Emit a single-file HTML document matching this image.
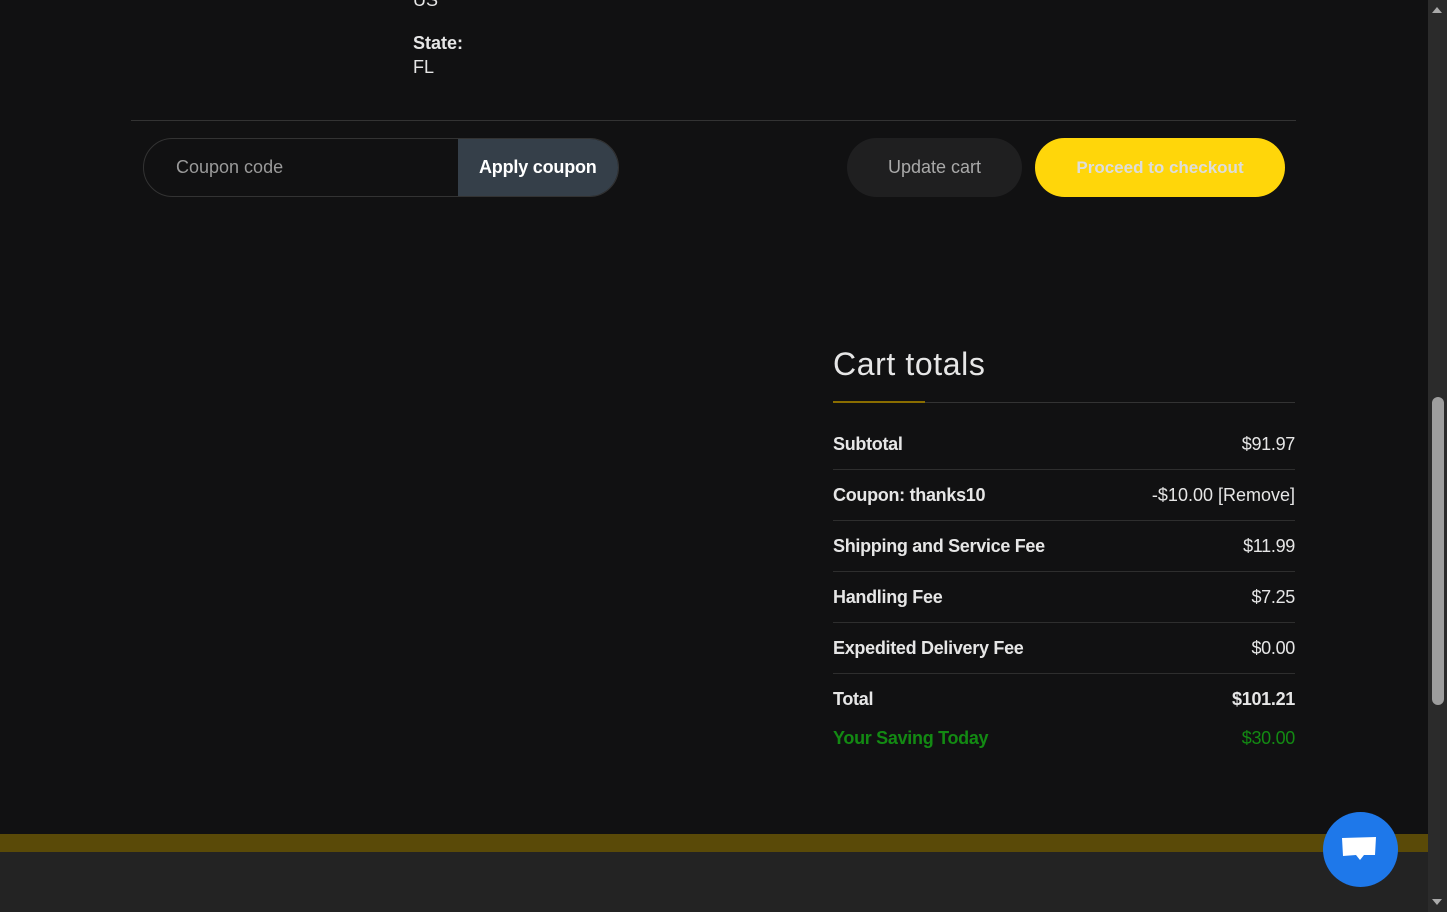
<!DOCTYPE html>
<html><head><meta charset="utf-8"><style>
*{margin:0;padding:0;box-sizing:border-box}
body{width:1447px;height:912px;background:#111112;font-family:"Liberation Sans",sans-serif;color:#e6e6e6;position:relative;overflow:hidden}
.a{position:absolute}
.row{position:absolute;left:833px;width:462px;height:51px;border-bottom:1px solid #2e2e2e;font-size:18px;display:flex;justify-content:space-between;align-items:center;letter-spacing:-0.3px}
.row b{font-weight:bold}
</style></head><body>
<div class="a" style="left:413px;top:-10px;font-size:18px">US</div>
<div class="a" style="left:413px;top:33px;font-size:18px;font-weight:bold">State:</div>
<div class="a" style="left:413px;top:57px;font-size:18px">FL</div>
<div class="a" style="left:131px;top:120px;width:1165px;height:1px;background:#333"></div>
<div class="a" style="left:143px;top:138px;width:476px;height:59px;border:1px solid #333;border-radius:30px;overflow:hidden;background:#111112">
 <div class="a" style="left:32px;top:18px;font-size:18px;color:#9a9a9a">Coupon code</div>
 <div class="a" style="left:314px;top:0;width:162px;height:59px;background:#353f49;color:#fff;font-weight:bold;font-size:18px;line-height:57px;padding-left:21px;letter-spacing:-0.2px">Apply coupon</div>
</div>
<div class="a" style="left:847px;top:138px;width:175px;height:59px;border-radius:30px;background:#1f1f20;color:#a9a9a9;font-size:18px;line-height:59px;text-align:center">Update cart</div>
<div class="a" style="left:1035px;top:138px;width:250px;height:59px;border-radius:30px;background:#ffd60a;color:#ddd;font-weight:bold;font-size:17px;line-height:59px;text-align:center">Proceed to checkout</div>
<div class="a" style="left:833px;top:346px;font-size:32px;color:#e6e6e6;letter-spacing:0.6px">Cart totals</div>
<div class="a" style="left:833px;top:402px;width:462px;height:1px;background:#333"></div>
<div class="a" style="left:833px;top:401px;width:92px;height:2px;background:#8a6d00"></div>
<div class="row" style="top:419px"><b>Subtotal</b><span>$91.97</span></div>
<div class="row" style="top:470px"><b>Coupon: thanks10</b><span style="letter-spacing:0">-$10.00 [Remove]</span></div>
<div class="row" style="top:521px"><b>Shipping and Service Fee</b><span>$11.99</span></div>
<div class="row" style="top:572px"><b>Handling Fee</b><span>$7.25</span></div>
<div class="row" style="top:623px"><b>Expedited Delivery Fee</b><span>$0.00</span></div>
<div class="row" style="top:674px;border:none"><b>Total</b><b>$101.21</b></div>
<div class="row" style="top:713px;border:none;height:50px;color:#138a13"><b>Your Saving Today</b><span>$30.00</span></div>
<div class="a" style="left:0;top:834px;width:1428px;height:18px;background:#5a4a08"></div>
<div class="a" style="left:0;top:852px;width:1428px;height:60px;background:#232323"></div>
<div class="a" style="left:1323px;top:812px;width:75px;height:75px;border-radius:50%;background:#1e78ea"></div>
<svg class="a" style="left:1340px;top:835px" width="40" height="32" viewBox="0 0 40 32"><path d="M2 3 L36 2 L35 20 L24 20 L20 25 L16 20 L3 21 Z" fill="#fff"/></svg>
<div class="a" style="left:1428px;top:0;width:19px;height:912px;background:#2b2b2b"></div>
<div class="a" style="left:1432px;top:397px;width:12px;height:308px;border-radius:6px;background:#9e9e9e"></div>
<svg class="a" style="left:1431px;top:5px" width="12" height="10"><path d="M1 8 L6 2 L11 8Z" fill="#aaa"/></svg>
<svg class="a" style="left:1431px;top:897px" width="12" height="10"><path d="M1 2 L6 8 L11 2Z" fill="#aaa"/></svg>
</body></html>
